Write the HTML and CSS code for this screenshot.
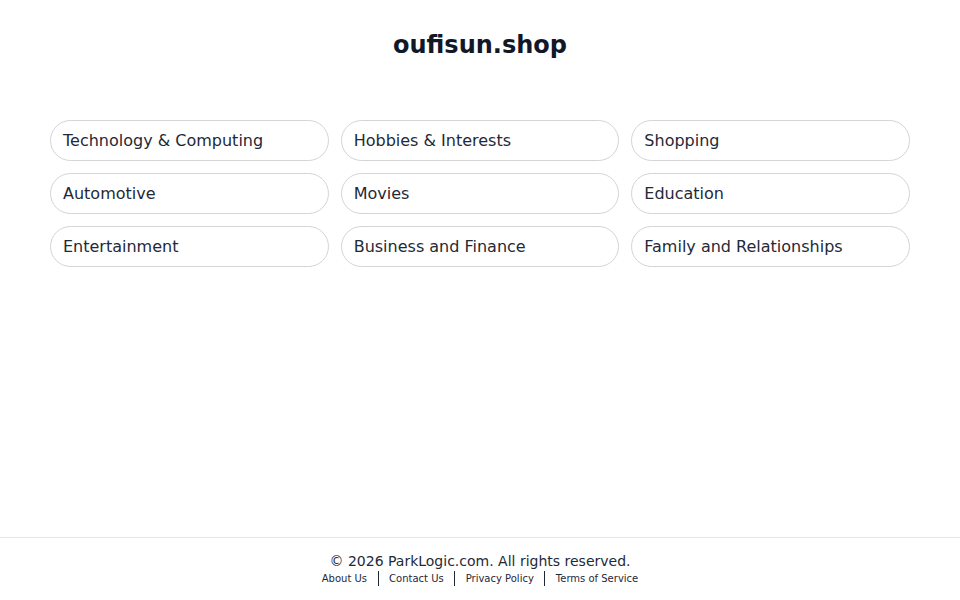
FILE: index.html
```html
<!DOCTYPE html>
<html lang="en">

<head>
    <meta charset="UTF-8">
    <meta name="viewport" content="width=device-width, initial-scale=1.0">
    <title>oufisun.shop</title>
    <link rel="stylesheet" href="styles.css">
</head>

<body>
    <div class="page">
        <h1 class="titulo">oufisun.shop</h1>

        <div class="categorias">
            <a class="pill" href="#">Technology &amp; Computing</a>
            <a class="pill" href="#">Hobbies &amp; Interests</a>
            <a class="pill" href="#">Shopping</a>
            <a class="pill" href="#">Automotive</a>
            <a class="pill" href="#">Movies</a>
            <a class="pill" href="#">Education</a>
            <a class="pill" href="#">Entertainment</a>
            <a class="pill" href="#">Business and Finance</a>
            <a class="pill" href="#">Family and Relationships</a>
        </div>
    </div>

    <footer class="rodape">
        <p class="copy">© 2026 ParkLogic.com. All rights reserved.</p>
        <div class="links">
            <a href="#">About Us</a>
            <span class="sep"></span>
            <a href="#">Contact Us</a>
            <span class="sep"></span>
            <a href="#">Privacy Policy</a>
            <span class="sep"></span>
            <a href="#">Terms of Service</a>
        </div>
    </footer>
</body>

</html>
```

FILE: styles.css
```css
* {
    padding: 0;
    margin: 0;
    box-sizing: border-box;
}

body {
    font-family: "DejaVu Sans", sans-serif;
    color: #1f2937;
    background-color: #fff;
    min-height: 100vh;
    display: flex;
    flex-direction: column;
}

/* Parte de cima */
.page {
    flex: 1;
    padding: 30px 50px 0;
}

.titulo {
    text-align: center;
    font-size: 24px;
    line-height: 30px;
    color: #111827;
    font-weight: bold;
}

/* Grade de categorias */
.categorias {
    display: grid;
    grid-template-columns: repeat(3, 1fr);
    gap: 12px;
    margin-top: 60px;
}

.pill {
    display: block;
    height: 41px;
    line-height: 39px;
    padding: 0 12px;
    border: 1px solid #d4d4d8;
    border-radius: 999px;
    font-size: 16px;
    color: #1f2937;
    text-decoration: none;
    white-space: nowrap;
}

/* Rodapé */
.rodape {
    border-top: 1px solid #e5e7eb;
    height: 63px;
    padding-top: 14px;
    text-align: center;
}

.copy {
    font-size: 14px;
    line-height: 18px;
    color: #1f2937;
}

.links {
    display: flex;
    justify-content: center;
    align-items: center;
    margin-top: 1px;
}

.links a {
    font-size: 10px;
    line-height: 14px;
    color: #1f2937;
    text-decoration: none;
}

.sep {
    display: inline-block;
    width: 1px;
    height: 15px;
    background-color: #1f2937;
    margin: 0 10.5px;
}
```
